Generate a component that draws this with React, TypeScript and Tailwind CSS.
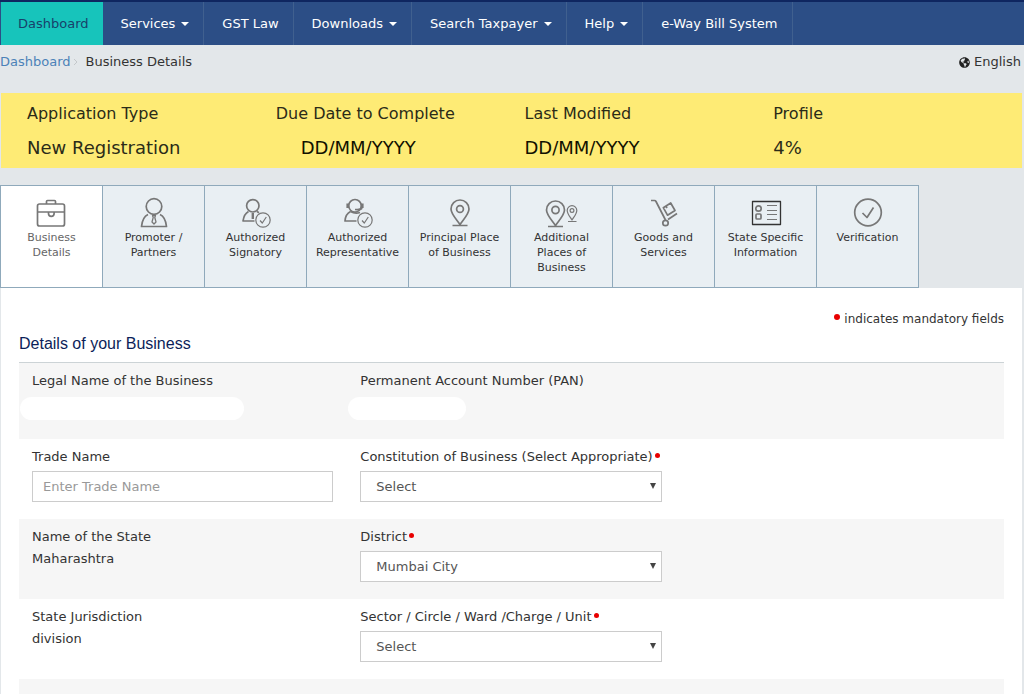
import type { ReactNode } from 'react';
import { FaGlobeAmericas } from 'react-icons/fa';

const navItems = [
  { label: 'Dashboard', active: true },
  { label: 'Services', menu: true },
  { label: 'GST Law' },
  { label: 'Downloads', menu: true },
  { label: 'Search Taxpayer', menu: true },
  { label: 'Help', menu: true },
  { label: 'e-Way Bill System' },
];

const summary = [
  { label: 'Application Type', value: 'New Registration' },
  { label: 'Due Date to Complete', value: 'DD/MM/YYYY', date: true, indent: true },
  { label: 'Last Modified', value: 'DD/MM/YYYY', date: true },
  { label: 'Profile', value: '4%' },
];

const ApprovedBadge = () => (
  <g strokeWidth="1.2">
    <circle cx="29" cy="23" r="7.2" />
    <path d="M26 23.5l2.3 2.5 4-6" />
  </g>
);

const BriefcaseIcon = () => (
  <>
    <rect x="7.5" y="7" width="27" height="22" rx="2" />
    <path d="M16.5 7V4.5q0-1 1-1h7q1 0 1 1V7M7.5 15h27" />
    <path d="M18.5 15v1.5a2.8 2.8 0 0 0 5.600 0V15" />
  </>
);

const PersonIcon = () => (
  <>
    <circle cx="22" cy="9.5" r="7.8" />
    <path d="M16 17.500Q10.500 20 9.500 29.500h25Q33.500 20 28 17.500" />
    <path d="M20.500 18.500h3l-.7 2 1.200 4.500-2 2-2-2 1.200-4.500z" strokeWidth="1.300" />
  </>
);

const SignatoryIcon = () => (
  <>
    <circle cx="18.800" cy="8.800" r="6.200" />
    <path d="M14.500 14.500Q10 17 9 24h11.500M23 14.500l2 1.200" />
    <path d="M18.800 16v6" strokeWidth="2.400" />
    <ApprovedBadge />
  </>
);

const RepresentativeIcon = () => (
  <>
    <circle cx="19" cy="8.800" r="6.300" />
    <path d="M11.800 6.500v4.500M26.200 6.500v4.500" strokeWidth="2.800" />
    <path d="M26 11q-1 2-7 1.500" />
    <path d="M14.500 14.500Q9.500 17 9 24h11.500M14.500 14.500q4.500 2.500 9.500 1" />
    <ApprovedBadge />
  </>
);

const PlaceIcon = () => (
  <>
    <path d="M22 27.500c-3-4.500-9-10.500-9-15.500a9 9 0 0 1 18 0c0 5-6 11-9 15.500zM14.500 28.500h15" />
    <circle cx="22" cy="12" r="3.400" />
  </>
);

const PlacesIcon = () => (
  <>
    <path d="M15.500 28.500c-3-4.500-9-10.500-9-15.500a9 9 0 0 1 18 0c0 5-6 11-9 15.500zM8 29.500h15" />
    <circle cx="15.500" cy="13" r="3.600" />
    <g strokeWidth="1.200">
      <path d="M32 23c-1.500-2.500-4.800-6-4.800-9.500a4.800 4.800 0 0 1 9.600 0c0 3.500-3.300 7-4.800 9.500zM28 24.500h8.500" />
      <circle cx="32" cy="13.500" r="1.900" />
    </g>
  </>
);

const TrolleyIcon = () => (
  <>
    <path d="M9 3.500h3.500q1 0 1.500 1L23.500 23M26 22.500l9-6" />
    <circle cx="23.500" cy="26" r="2.700" />
    <path d="M21.300 10.700L28.700 6l4.300 7.500-7.500 4.700zM24 9l1 2" />
  </>
);

const InfoCardIcon = () => (
  <>
    <rect x="8.500" y="4.500" width="28" height="23" className="stroke-[#333]" strokeWidth="1.300" />
    <circle cx="14.500" cy="11.500" r="2.700" />
    <rect x="12" y="17" width="5" height="5" rx="1" />
    <path d="M23 8.500h10M23 13.500h10M23 17.500h10M23 22.500h10" strokeWidth="1.200" />
  </>
);

const VerifiedIcon = () => (
  <>
    <circle cx="22" cy="15.500" r="13.300" />
    <path d="M16.500 16l4.500 4.500 6.500-10" />
  </>
);

const tabs = [
  { label: 'Business Details', icon: <BriefcaseIcon />, active: true },
  { label: 'Promoter / Partners', icon: <PersonIcon /> },
  { label: 'Authorized Signatory', icon: <SignatoryIcon /> },
  { label: 'Authorized Representative', icon: <RepresentativeIcon /> },
  { label: 'Principal Place of Business', icon: <PlaceIcon /> },
  { label: 'Additional Places of Business', icon: <PlacesIcon /> },
  { label: 'Goods and Services', icon: <TrolleyIcon /> },
  { label: 'State Specific Information', icon: <InfoCardIcon /> },
  { label: 'Verification', icon: <VerifiedIcon /> },
];

const Required = () => <span className="mb-1 ml-0.5 inline-block h-[5px] w-[5px] rounded-full bg-[#e80000] align-middle" />;

const Row = ({ shaded, short, children }: { shaded?: boolean; short?: boolean; children?: ReactNode }) => (
  <div className={`grid grid-cols-3 ${short ? 'min-h-[76px]' : 'min-h-20'} ${shaded ? 'bg-[#f6f6f6]' : ''}`}>{children}</div>
);

const Cell = ({ children }: { children: ReactNode }) => <div className="pt-2 pr-3.5 pl-[13px]">{children}</div>;

const SelectField = ({ id, label, value }: { id: string; label: string; value: string }) => (
  <Cell>
    <label htmlFor={id} className="block whitespace-nowrap leading-5">
      {label}
      <Required />
    </label>
    <div className="relative mt-1">
      <select
        id={id}
        defaultValue={value}
        className="block h-[31px] w-full appearance-none border border-[#ccc] bg-white pl-[15px] pr-6 text-[#555]"
      >
        <option>{value}</option>
      </select>
      <svg viewBox="0 0 6 6" className="pointer-events-none absolute top-3 right-1.5 h-1.5 w-1.5 fill-[#444]">
        <path d="M0 0h6L3 6z" />
      </svg>
    </div>
  </Cell>
);

const TextValue = ({ label, value }: { label: string; value: string }) => (
  <Cell>
    <p className="leading-5">{label}</p>
    <p className="mt-0.5 leading-5">{value}</p>
  </Cell>
);

export default function App() {
  return (
    <div className="min-h-screen bg-[#e3e7ea] font-['DejaVu_Sans',Verdana,sans-serif] text-[13px] text-[#333]">
      <nav className="flex border-t-2 border-[#0f2660] bg-[#2c4e86] pl-px">
        {navItems.map((item) => (
          <a
            key={item.label}
            href="#"
            className={`flex h-[43px] items-center whitespace-nowrap border-r ${
              item.active
                ? 'border-[#17c4bb] bg-[#17c4bb] pr-[13px] pl-[17px] text-[#17416b]'
                : 'border-[#40608f] pr-3.5 pl-[18px] text-white'
            }`}
          >
            {item.label}
            {item.menu && <span className="ml-1.5 border-x-4 border-t-4 border-x-transparent border-t-white" />}
          </a>
        ))}
      </nav>

      <div className="flex h-12 items-start justify-between pt-[7px] pr-[3px]">
        <div className="flex items-center leading-5">
          <a href="#" className="text-[#4c82b8]">Dashboard</a>
          <svg viewBox="0 0 5 8" className="mr-2 ml-0.5 h-2 w-[5px] fill-none stroke-[#c4c8cb]">
            <path d="M1 1l3 3-3 3" />
          </svg>
          <span>Business Details</span>
        </div>
        <button type="button" className="flex items-center gap-1 leading-5">
          <FaGlobeAmericas size={11} className="text-[#222]" />
          English
        </button>
      </div>

      <main className="mx-px">
        <section className="mr-px grid grid-cols-4 bg-[#feeb75] pt-[9px] pb-1.5 pl-[26px] text-[#2b2b18]">
          {summary.map((item) => (
            <div key={item.label}>
              <p className="text-[16px] leading-6">{item.label}</p>
              <p className={`mt-2 text-[18px] leading-7 ${item.date ? 'text-[#111100]' : ''} ${item.indent ? 'pl-[25px]' : ''}`}>
                {item.value}
              </p>
            </div>
          ))}
        </section>

        <div className="-ml-px mt-[17px] flex text-[11px]">
          {tabs.map((tab) => (
            <a
              key={tab.label}
              href="#"
              className={`-mr-px flex h-[103px] w-[103px] flex-col items-center border border-[#8fa9bb] px-2 pt-[11px] text-center leading-[15px] ${
                tab.active ? 'bg-white text-[#666]' : 'bg-[#e9eff3]'
              }`}
            >
              <svg
                viewBox="0 0 44 32"
                className="mb-px h-8 w-11 shrink-0 fill-none stroke-[#777]"
                strokeWidth="1.7"
                strokeLinejoin="round"
              >
                {tab.icon}
              </svg>
              {tab.label}
            </a>
          ))}
        </div>

        <section className="mr-px bg-white px-[18px] pt-[21px] pb-4">
          <p className="text-right text-[12px] leading-5">
            <span className="mr-1 mb-1.5 inline-block h-1.5 w-1.5 rounded-full bg-[#e80000] align-middle" />
            indicates mandatory fields
          </p>
          <h1 className="mt-[3px] border-b border-[#ccd3d6] pb-1.5 font-['Liberation_Sans',Arial,sans-serif] text-[16px] leading-6 text-[#0b1e59]">
            Details of your Business
          </h1>

          <Row shaded short>
            <Cell>
              <p className="leading-5">Legal Name of the Business</p>
              <div className="-ml-3 mt-1.5 h-[23px] w-[224px] rounded-full bg-white" />
            </Cell>
            <Cell>
              <p className="leading-5">Permanent Account Number (PAN)</p>
              <div className="-ml-3 mt-1.5 h-[23px] w-[118px] rounded-full bg-white" />
            </Cell>
          </Row>

          <Row>
            <Cell>
              <label htmlFor="trade-name" className="block leading-5">Trade Name</label>
              <input
                id="trade-name"
                placeholder="Enter Trade Name"
                className="mt-1 block h-[31px] w-full border border-[#ccc] bg-white px-2.5 placeholder:text-[#999]"
              />
            </Cell>
            <SelectField id="constitution" label="Constitution of Business (Select Appropriate)" value="Select" />
          </Row>

          <Row shaded>
            <TextValue label="Name of the State" value="Maharashtra" />
            <SelectField id="district" label="District" value="Mumbai City" />
          </Row>

          <Row>
            <TextValue label="State Jurisdiction" value="division" />
            <SelectField id="sector" label="Sector / Circle / Ward /Charge / Unit" value="Select" />
          </Row>

          <Row shaded />
        </section>
      </main>
    </div>
  );
}
